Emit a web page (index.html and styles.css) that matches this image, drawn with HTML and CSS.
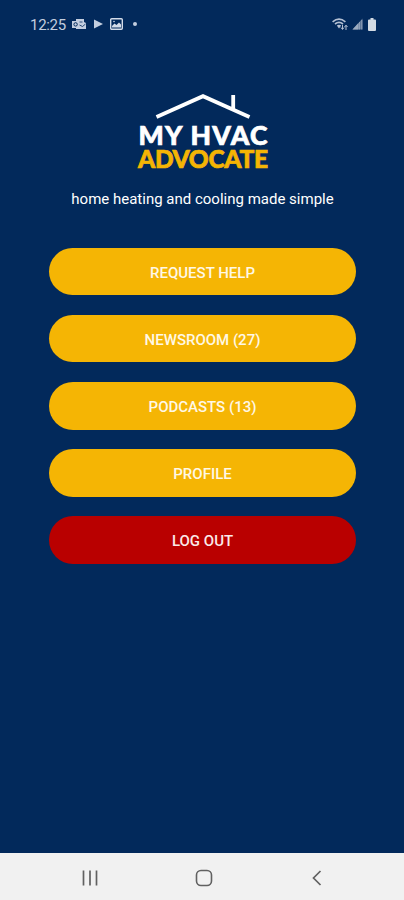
FILE: index.html
```
<!DOCTYPE html>
<html lang="en">

<head>
    <meta charset="UTF-8">
    <meta name="viewport" content="width=device-width, initial-scale=1.0">
    <title>My HVAC Advocate</title>
    <link rel="stylesheet" href="styles.css">
</head>

<body>
    <header class="status-bar">
        <div class="status-left">
            <span class="clock">12:25</span>
            <svg class="icon-mail" width="14" height="12" viewBox="0 0 14 12">
                <path d="M4 1h8v3l2 1v6H4z" fill="#c3cedf" />
                <path d="M0 3h7v7H0z" fill="#c3cedf" />
                <circle cx="3.6" cy="6.4" r="1.7" fill="none" stroke="#02295b" stroke-width="1" />
                <path d="M7.5 7l3 1.5L13.5 6M7.5 4h3" fill="none" stroke="#02295b" stroke-width=".8" />
            </svg>
            <svg class="icon-play" width="9" height="10" viewBox="0 0 9 10">
                <path d="M0 .5l9 4.500-9 4.500z" fill="#c3cedf" />
            </svg>
            <svg class="icon-image" width="13" height="12" viewBox="0 0 13 12">
                <rect x=".7" y=".7" width="11.6" height="10.6" rx="1" fill="none" stroke="#d3dbe8" stroke-width="1.4" />
                <path d="M2 9.500V8l2.500-2.500 2 1.500L9 4.500l2 2v3z" fill="#d3dbe8" />
                <circle cx="4" cy="3.5" r=".8" fill="#d3dbe8" />
            </svg>
            <span class="dot"></span>
        </div>
        <div class="status-right">
            <svg class="icon-wifi" width="17" height="13" viewBox="0 0 17 13">
                <g fill="none" stroke="#b4c0d3" stroke-width="1.7">
                    <path d="M.6 3.800Q7 -1.400 13.400 3.800" />
                    <path d="M3 6Q7 2.800 11 6" />
                </g>
                <path d="M4.800 7.500Q7 6 9.200 7.500L7 10.500z" fill="#b4c0d3" />
                <path d="M10.500 7v4M9 9.500l1.500 2 1.500-2M14 12V7.500M12.500 9l1.500-1.800L15.500 9" fill="none" stroke="#b4c0d3" stroke-width="1" />
            </svg>
            <svg class="icon-signal" width="11" height="12" viewBox="0 0 11 12">
                <path d="M10.500 .5v11H.5z" fill="#5e7798" />
                <path d="M6.500 5v6.500H.5z" fill="#9cabc0" />
                <path d="M7.500 4v7.500M9.800 2v9.500" stroke="#9cabc0" stroke-width=".8" />
            </svg>
            <svg class="icon-battery" width="8" height="13" viewBox="0 0 8 13">
                <path d="M2.500 0h3v1.500H7a1 1 0 0 1 1 1V12a1 1 0 0 1-1 1H1a1 1 0 0 1-1-1V2.500a1 1 0 0 1 1-1h1.500z" fill="#d3dbe4" />
            </svg>
        </div>
    </header>

    <main class="content">
        <svg class="logo" width="142" height="86" viewBox="-4 0 142 86">
            <path d="M21.500 25L68 4.200 114.500 25M98.200 3v14.500" fill="none" stroke="#fff" stroke-width="3.8" />
            <text class="logo-top" x="3.5" y="52.8" textLength="129">MY HVAC</text>
            <text class="logo-bottom" x="3" y="76" textLength="130">ADVOCATE</text>
        </svg>
        <p class="tagline">home heating and cooling made simple</p>

        <div class="menu">
            <button class="menu-button">REQUEST HELP</button>
            <button class="menu-button">NEWSROOM (27)</button>
            <button class="menu-button">PODCASTS (13)</button>
            <button class="menu-button">PROFILE</button>
            <button class="menu-button logout">LOG OUT</button>
        </div>
    </main>

    <nav class="nav-bar">
        <svg width="18" height="18" viewBox="0 0 18 18">
            <path d="M2.500 1.500v15M9 1.500v15M15.500 1.500v15" stroke="#616161" stroke-width="1.7" />
        </svg>
        <svg width="18" height="18" viewBox="0 0 18 18">
            <rect x="1.5" y="1.5" width="15" height="15" rx="4.5" fill="none" stroke="#616161" stroke-width="1.6" />
        </svg>
        <svg width="18" height="18" viewBox="0 0 18 18">
            <path d="M12.500 2L5.500 9l7 7" fill="none" stroke="#616161" stroke-width="1.7" />
        </svg>
    </nav>
</body>

</html>
```
FILE: styles.css
```
body {
    margin: 0;
    height: 100vh;
    display: flex;
    flex-direction: column;
    overflow: hidden;
    background-color: #02295b;
    font-family: Roboto, sans-serif;
    color: #fff;
}

.status-bar {
    height: 48px;
    padding: 0 28px 0 30px;
    display: flex;
    justify-content: space-between;
    align-items: center;
}

.status-left,
.status-right {
    display: flex;
    align-items: center;
}

.clock {
    width: 37px;
    margin-right: 5px;
    padding-top: 2px;
    font-size: 15px;
    letter-spacing: -0.3px;
    color: #c3cedf;
}

.icon-play {
    margin-left: 8px;
}

.icon-image {
    margin-left: 7px;
}

.dot {
    width: 4px;
    height: 4px;
    margin-left: 10px;
    border-radius: 50%;
    background-color: #c3cedf;
}

.status-right {
    gap: 3px;
}

.icon-battery {
    margin-left: 2px;
}

.content {
    flex: 1;
    display: flex;
    flex-direction: column;
    align-items: center;
}

.logo {
    display: block;
    margin-top: 44px;
}

.logo-top,
.logo-bottom {
    font-family: Lato, sans-serif;
    font-size: 26.5px;
    font-weight: 900;
    fill: #fff;
    stroke: #fff;
    stroke-width: 0.7px;
}

.logo-bottom {
    font-size: 24.5px;
    fill: #f5b504;
    stroke: #f5b504;
}

.tagline {
    margin: 11px 0 0 1px;
    font-size: 15px;
    line-height: 21px;
    white-space: nowrap;
}

.menu {
    width: 306.5px;
    margin: 37.8px 0 0 1px;
    display: flex;
    flex-direction: column;
    gap: 19.5px;
}

.menu-button {
    height: 47.6px;
    padding: 2px 0 0;
    border: none;
    border-radius: 24px;
    background-color: #f5b504;
    color: #fff8e6;
    font-family: inherit;
    font-size: 15px;
    font-weight: 500;
    cursor: pointer;
}

.menu-button.logout {
    background-color: #b90000;
    color: #fbe9e9;
}

.nav-bar {
    height: 47px;
    padding: 2px 78px 0 81px;
    box-sizing: border-box;
    display: flex;
    justify-content: space-between;
    align-items: center;
    background-color: #f1f1f1;
}
```
